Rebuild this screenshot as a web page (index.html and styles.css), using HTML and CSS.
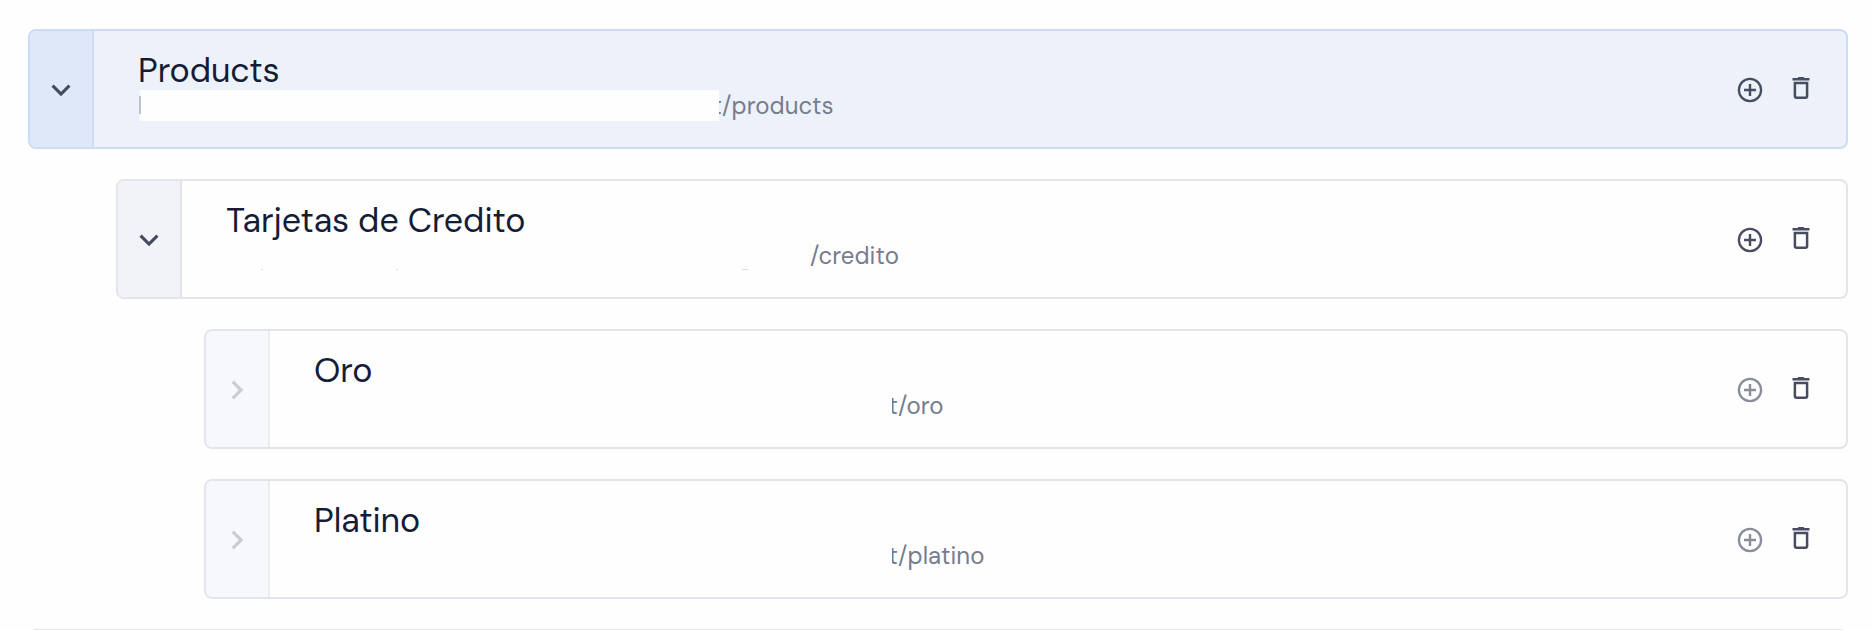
FILE: index.html
```html
<!DOCTYPE html>
<html lang="es">
<head>
<meta charset="utf-8">
<title>Products</title>
<link rel="stylesheet" href="styles.css">
</head>
<body>
<svg class="defs" aria-hidden="true">
  <symbol id="chevron" viewBox="0 0 24 24"><path d="M3.600 7.700 12 16.100l8.400-8.400" fill="none" stroke="currentColor" stroke-width="3.200"/></symbol>
  <symbol id="add" viewBox="0 0 26 26"><circle cx="13" cy="13" r="11.100" fill="none" stroke="currentColor" stroke-width="2.300"/><path d="M13 7v12M7 13h12" fill="none" stroke="currentColor" stroke-width="2.400"/></symbol>
  <symbol id="trash" viewBox="0 0 18 24"><path d="M.5 2h5L6.600 1h4.800l1.100 1h5v2.500H.5z" fill="currentColor"/><path d="M2.900 6.900h12.200V20q0 1.700-1.700 1.700H4.600Q2.900 21.700 2.900 20z" fill="none" stroke="currentColor" stroke-width="2.500"/></symbol>
</svg>
<main class="tree">
  <article class="node selected">
    <button class="toggle" aria-label="Contraer"><svg><use href="#chevron"/></svg></button>
    <div class="info">
      <h2 class="title">Products</h2>
      <p class="path"><span class="mask mask-first"></span><span class="clip clip-first"><span>t</span></span><span class="slug">/products</span></p>
    </div>
    <div class="actions"><svg class="add"><use href="#add"/></svg><svg class="trash"><use href="#trash"/></svg></div>
  </article>
  <article class="node level-1">
    <button class="toggle" aria-label="Contraer"><svg><use href="#chevron"/></svg></button>
    <div class="info">
      <h2 class="title">Tarjetas de Credito</h2>
      <p class="path"><span class="mask mask-second"><i class="tail tail-a"></i><i class="tail tail-b"></i><i class="tail tail-c"></i></span><span class="slug">/credito</span></p>
    </div>
    <div class="actions"><svg class="add"><use href="#add"/></svg><svg class="trash"><use href="#trash"/></svg></div>
  </article>
  <article class="node level-2">
    <button class="toggle" aria-label="Expandir" disabled><svg><use href="#chevron"/></svg></button>
    <div class="info">
      <h2 class="title">Oro</h2>
      <p class="path"><span class="mask mask-leaf"></span><span class="clip clip-leaf"><span>t</span></span><span class="slug">/oro</span></p>
    </div>
    <div class="actions"><svg class="add"><use href="#add"/></svg><svg class="trash"><use href="#trash"/></svg></div>
  </article>
  <article class="node level-2">
    <button class="toggle" aria-label="Expandir" disabled><svg><use href="#chevron"/></svg></button>
    <div class="info">
      <h2 class="title">Platino</h2>
      <p class="path"><span class="mask mask-leaf"></span><span class="clip clip-leaf"><span>t</span></span><span class="slug">/platino</span></p>
    </div>
    <div class="actions"><svg class="add"><use href="#add"/></svg><svg class="trash"><use href="#trash"/></svg></div>
  </article>
  <article class="node"></article>
</main>
</body>
</html>
```

FILE: styles.css
```css
* { box-sizing: border-box; }
html, body { margin: 0; height: 630px; overflow: hidden; }
body { background: #fefefe; font-family: "DM Sans", Inter, sans-serif; color: #141c36; }
.defs { position: absolute; width: 0; height: 0; }
.tree { display: flex; flex-direction: column; gap: 30px; height: 630px; overflow: hidden; padding: 29px 24px 0 28px; }
.node { display: flex; flex: none; height: 120px; border: 2px solid #e4e5ea; border-radius: 8px; background: #fefefe; overflow: hidden; }
.level-1 { margin-left: 88px; }
.level-2 { margin-left: 176px; }
.selected { background: #edf1fa; border-color: #cddcf5; }
.toggle { display: flex; align-items: center; justify-content: center; flex: none; width: 64px; padding: 2px 0 0; border: 0; border-right: 2px solid #e4e5ea; background: #f2f3f8; color: #454a5e; }
.toggle svg { width: 24px; height: 24px; }
.selected .toggle { background: #dfe8f8; border-color: #cddcf5; }
.toggle:disabled { background: #f7f8fb; border-color: #ecedf1; color: #cbcdd3; }
.toggle:disabled svg { transform: rotate(-90deg); }
.info { flex: 1; min-width: 0; padding: 20px 0 0 44px; }
.title { margin: 0; height: 39px; line-height: 39px; font-size: 34px; font-weight: 400; letter-spacing: -0.05px; white-space: nowrap; }
.path { display: flex; height: 31px; margin: 0; line-height: 31px; font-size: 24px; letter-spacing: 0.1px; color: #777c8d; white-space: nowrap; }
.mask { position: relative; flex: none; height: 31px; background: #fefefe; }
.mask-first { width: 579px; margin-left: 2px; }
.mask-first::before { content: ""; position: absolute; left: -1px; top: 6px; width: 2px; height: 18px; background: #bfc2cb; }
.mask-second { width: 584px; }
.mask-leaf { width: 578px; }
.tail { position: absolute; top: 29px; width: 2px; height: 1px; background: #dcdde2; }
.tail-a { left: 35px; }
.tail-b { left: 170px; }
.tail-c { left: 516px; width: 6px; }
.clip { flex: none; display: flex; justify-content: flex-end; overflow: hidden; }
.clip-first { width: 3px; }
.clip-leaf { width: 6px; }
.actions { display: flex; align-items: center; gap: 29px; padding: 2px 36px 0 0; }
.actions svg { display: block; color: #474c60; }
.add { width: 26px; height: 26px; }
.trash { width: 18px; height: 24px; margin-top: -4px; }
.level-2 .add { color: #898d9b; }
```
